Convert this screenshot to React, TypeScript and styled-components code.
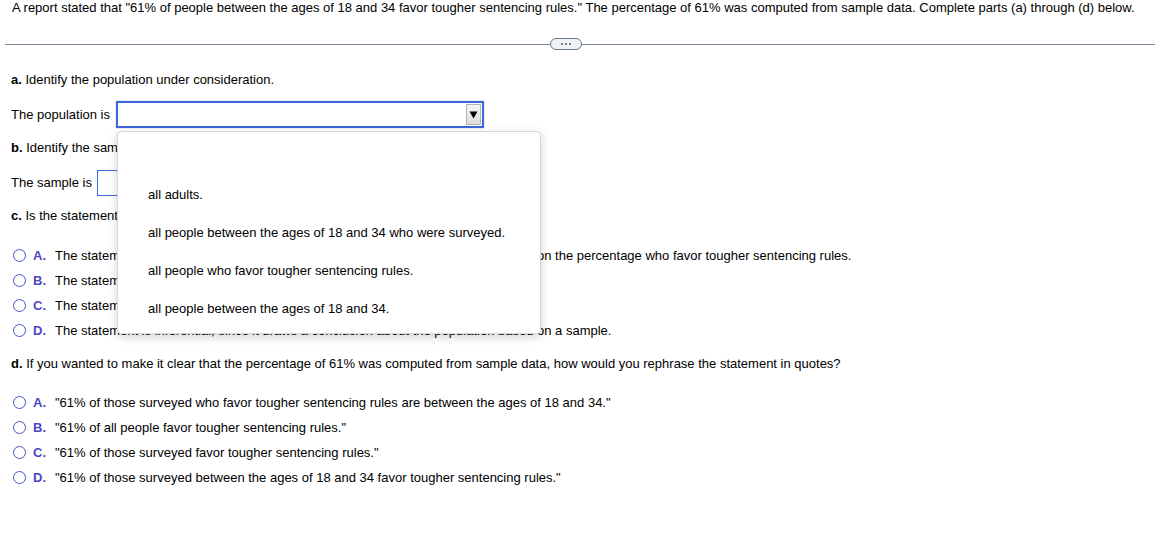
import React from "react";
import styled, { createGlobalStyle } from "styled-components";

const Global = createGlobalStyle`
  html, body { margin: 0; padding: 0; background: #fff; }
  body { font-family: "Liberation Sans", Arial, sans-serif; font-size: 13px; color: #000; }
`;

const Page = styled.div`
  width: 1164px;
  height: 534px;
  overflow: hidden;
  position: relative;
`;

const Header = styled.div`
  padding-left: 12px;
  line-height: 16px;
  height: 16px;
  white-space: nowrap;
`;

const Divider = styled.div`
  margin: 22px 9px 0 5px;
  height: 12px;
  display: flex;
  align-items: center;
  &::before, &::after {
    content: "";
    height: 1px;
    background: #7d8798;
  }
  &::before { width: 545px; }
  &::after { flex: 1; }
`;

const Pill = styled.div`
  width: 30px;
  height: 10px;
  border: 1px solid #6e7a8c;
  border-radius: 6px;
  background: #eef1f6;
  display: flex;
  align-items: center;
  justify-content: center;
  gap: 2px;
`;

const Dot = styled.span`
  width: 2px;
  height: 2px;
  background: #4c5668;
  border-radius: 1px;
`;

const Content = styled.div`
  padding-left: 11px;
  display: flex;
  flex-direction: column;
`;

const Prompt = styled.div<{ $mt: number }>`
  margin-top: ${(p) => p.$mt}px;
  line-height: 16px;
  height: 16px;
  white-space: nowrap;
`;

const Part = styled.b`
  font-weight: bold;
`;

const FieldRow = styled.div<{ $mt: number }>`
  margin-top: ${(p) => p.$mt}px;
  display: flex;
  align-items: center;
  height: 27px;
  white-space: nowrap;
`;

const SelectWrap = styled.div`
  position: relative;
  margin-left: 6px;
`;

const SelectBox = styled.div`
  width: 363px;
  height: 23px;
  border: 2px solid #3d66d8;
  box-shadow: 0 0 1px #8aa6ee;
  display: flex;
  justify-content: flex-end;
  align-items: center;
  padding-right: 1px;
  background: #fff;
`;

const ArrowBtn = styled.div`
  width: 13px;
  height: 19px;
  border: 1px solid #b4b4b4;
  background: linear-gradient(#f6f6f6, #dcdcdc);
  display: flex;
  align-items: center;
  justify-content: center;
`;

const Menu = styled.div`
  position: absolute;
  top: 30px;
  left: 1px;
  width: 422px;
  padding: 6px 0 5px;
  background: #fff;
  border: 1px solid #d8d8d8;
  border-radius: 4px;
  box-shadow: 0 3px 10px rgba(0, 0, 0, 0.18);
  z-index: 5;
`;

const MenuItem = styled.div`
  height: 38px;
  line-height: 38px;
  padding-left: 30px;
  white-space: nowrap;
`;

const InputBox = styled.div`
  width: 60px;
  height: 24px;
  margin-left: 5px;
  border: 1px solid #3d66d8;
  background: #fff;
`;

const Options = styled.div<{ $mt: number }>`
  margin-top: ${(p) => p.$mt}px;
  display: flex;
  flex-direction: column;
`;

const Option = styled.div`
  height: 25px;
  display: flex;
  align-items: center;
  white-space: nowrap;
  padding-left: 2px;
`;

const Radio = styled.span`
  border: 1px solid #4358c0;
  border-radius: 50%;
  box-sizing: border-box;
  width: 13px;
  height: 13px;
  margin-right: 7px;
  background: #fff;
`;

const Letter = styled.span`
  font-weight: bold;
  color: #4d47c4;
  width: 22px;
`;

const optionsC = [
  ["A.", "The statement is inferential, since it draws a conclusion about the population based on the percentage who favor tougher sentencing rules."],
  ["B.", "The statement is descriptive, since it describes a sample."],
  ["C.", "The statement is inferential, since it describes a sample."],
  ["D.", "The statement is inferential, since it draws a conclusion about the population based on a sample."],
];

const optionsD = [
  ["A.", "\"61% of those surveyed who favor tougher sentencing rules are between the ages of 18 and 34.\""],
  ["B.", "\"61% of all people favor tougher sentencing rules.\""],
  ["C.", "\"61% of those surveyed favor tougher sentencing rules.\""],
  ["D.", "\"61% of those surveyed between the ages of 18 and 34 favor tougher sentencing rules.\""],
];

const menuItems = [
  "",
  "all adults.",
  "all people between the ages of 18 and 34 who were surveyed.",
  "all people who favor tougher sentencing rules.",
  "all people between the ages of 18 and 34.",
];

export default function App() {
  return (
    <Page>
      <Global />
      <Header>
        A report stated that "61% of people between the ages of 18 and 34 favor tougher sentencing rules." The percentage of 61% was computed from sample data. Complete parts (a) through (d) below.
      </Header>
      <Divider>
        <Pill>
          <Dot />
          <Dot />
          <Dot />
        </Pill>
      </Divider>
      <Content>
        <Prompt $mt={22}>
          <Part>a.</Part> Identify the population under consideration.
        </Prompt>
        <FieldRow $mt={13}>
          The population is
          <SelectWrap>
            <SelectBox>
              <ArrowBtn>
                <svg width="9" height="9" viewBox="0 0 9 9">
                  <path d="M0.5 1.5 L8.5 1.5 L4.5 8.5 Z" fill="#000" />
                </svg>
              </ArrowBtn>
            </SelectBox>
            <Menu>
              {menuItems.map((m, i) => (
                <MenuItem key={i}>{m}</MenuItem>
              ))}
            </Menu>
          </SelectWrap>
        </FieldRow>
        <Prompt $mt={12}>
          <Part>b.</Part> Identify the sample under consideration.
        </Prompt>
        <FieldRow $mt={13}>
          The sample is
          <InputBox />
        </FieldRow>
        <Prompt $mt={12}>
          <Part>c.</Part> Is the statement descriptive or inferential? Explain.
        </Prompt>
        <Options $mt={19}>
          {optionsC.map(([l, t]) => (
            <Option key={l}>
              <Radio />
              <Letter>{l}</Letter>
              {t}
            </Option>
          ))}
        </Options>
        <Prompt $mt={13}>
          <Part>d.</Part> If you wanted to make it clear that the percentage of 61% was computed from sample data, how would you rephrase the statement in quotes?
        </Prompt>
        <Options $mt={18}>
          {optionsD.map(([l, t]) => (
            <Option key={l}>
              <Radio />
              <Letter>{l}</Letter>
              {t}
            </Option>
          ))}
        </Options>
      </Content>
    </Page>
  );
}
